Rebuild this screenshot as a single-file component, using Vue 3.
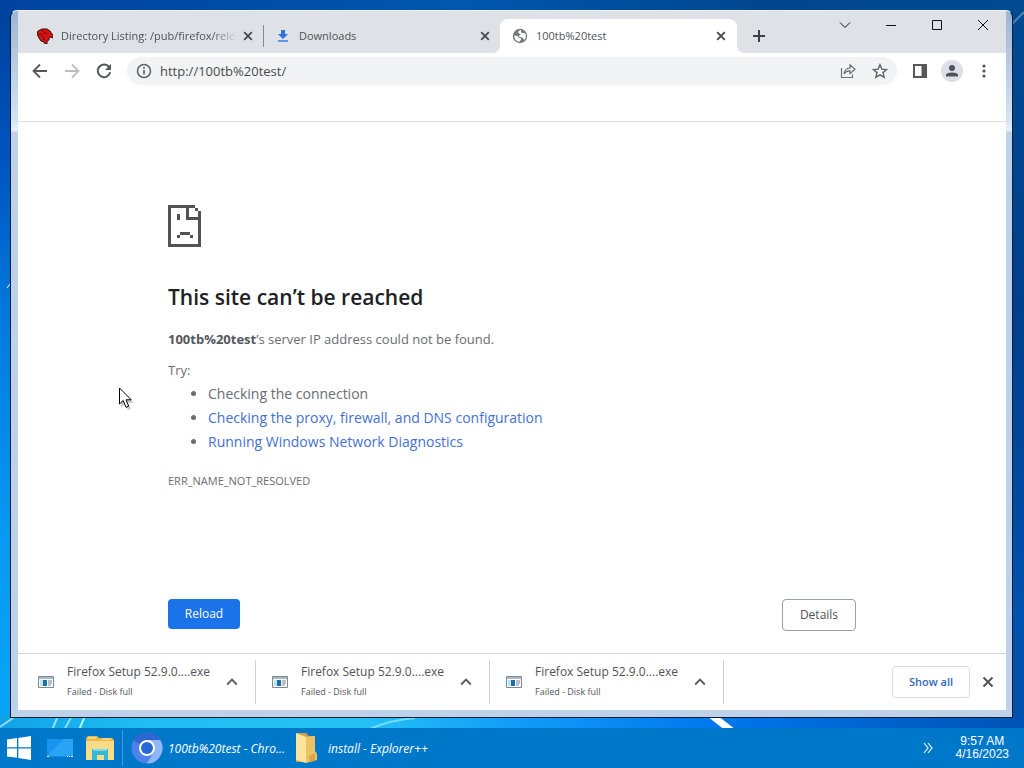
<script setup>
import { ref } from 'vue'

const address = ref('http://100tb%20test/')
const tabs = [
  { title: 'Directory Listing: /pub/firefox/rele', kind: 'dino' },
  { title: 'Downloads', kind: 'download' },
  { title: '100tb%20test', kind: 'globe', active: true },
]
const downloads = [1, 2, 3].map((id) => ({ id, name: 'Firefox Setup 52.9.0....exe', status: 'Failed - Disk full' }))
</script>

<template>
  <div class="desktop">
    <svg class="wallpaper" viewBox="0 0 1024 768" preserveAspectRatio="none" aria-hidden="true">
      <defs>
        <linearGradient id="leftGlow" x1="0" y1="0" x2="0" y2="1">
          <stop offset="0" stop-color="#00419b" />
          <stop offset=".2" stop-color="#0053bd" />
          <stop offset=".4" stop-color="#0078dc" />
          <stop offset=".7" stop-color="#0799f3" />
          <stop offset="1" stop-color="#0aa8f6" />
        </linearGradient>
        <linearGradient id="rightShade" x1="0" y1="0" x2="0" y2="1">
          <stop offset="0" stop-color="#004a91" />
          <stop offset=".4" stop-color="#003f8b" />
          <stop offset=".8" stop-color="#0052b0" />
          <stop offset="1" stop-color="#0052aa" />
        </linearGradient>
        <linearGradient id="topSky">
          <stop offset="0" stop-color="#0042a0" />
          <stop offset=".45" stop-color="#0057ae" />
          <stop offset=".75" stop-color="#00468e" />
          <stop offset="1" stop-color="#004a90" />
        </linearGradient>
        <linearGradient id="floor">
          <stop offset="0" stop-color="#10a2e8" />
          <stop offset=".14" stop-color="#20bdf2" />
          <stop offset=".35" stop-color="#25c2f5" />
          <stop offset=".5" stop-color="#129df8" />
          <stop offset=".7" stop-color="#0077ee" />
          <stop offset="1" stop-color="#0052b4" />
        </linearGradient>
      </defs>
      <rect width="512" height="768" fill="url(#leftGlow)" />
      <rect x="512" width="512" height="768" fill="url(#rightShade)" />
      <rect width="1024" height="11" fill="url(#topSky)" />
      <rect y="714" width="1024" height="20" fill="url(#floor)" />
      <path d="M0 727L16 716M52 730l6-14M64 730l8-14" stroke="#90dcfa" stroke-width="2" />
      <path d="M79 730l6-14" stroke="#a8ffe0" stroke-width="2" />
      <path d="M370 729q20-9 45-11" stroke="#75dcfb" stroke-width="2" fill="none" />
      <path d="M710 714l23 18" stroke="#fff" stroke-width="7" />
      <path d="M1012 24l12-12" stroke="#4b83b6" stroke-width="2" />
      <path d="M7 288l4-5v4" stroke="#fff" fill="none" />
    </svg>

    <div class="workspace">
      <main class="window">
        <header class="strip">
          <div class="tabs" role="tablist">
            <div v-for="tab in tabs" :key="tab.title" class="tab" :class="[tab.kind, { active: tab.active }]">
              <svg v-if="tab.kind === 'dino'" class="fav" viewBox="0 0 16 16">
                <path d="M0 6l1-3 2-1 2-1h5l3 2 2 3 2 2-1 2-3-1-1 1v2l-2 1v3H8l-1-2-3-1-2-3z" fill="#d41212" stroke="#3c1010" stroke-width="1" />
                <path d="M1 7l3-1 2 2 1 4M5 2l2 3 4 1" stroke="#7c0808" fill="none" />
              </svg>
              <svg v-else-if="tab.kind === 'download'" class="fav" viewBox="0 0 16 16">
                <path d="M6 2h4v4h3L8 11 3 6h3z" fill="#2f75df" /><path d="M3 13h10" stroke="#3c83e8" stroke-width="1.6" />
              </svg>
              <svg v-else class="fav" viewBox="0 0 16 16">
                <circle cx="8" cy="8" r="7.2" fill="#77797c" />
                <path d="M9.200 2.100q-1 2.500 1.200 3l2.700.1q1.800 3.500-.6 6.700L11 10.500 9.600 9H7.200V7.600L9 6.500 7 5.300 6 4.200l1.600-2zM2.200 7.400l3.500.5L7.300 10H9v1.500l-1.400 2.200Q2.500 13 2.200 7.400z" fill="#fff" />
              </svg>
              <button class="tab-title" role="tab" :aria-selected="!!tab.active">{{ tab.title }}</button>
              <button class="tab-close" :aria-label="'Close ' + tab.title">
                <svg viewBox="0 0 10 10"><path d="M1.200 1.200l7.600 7.600M8.800 1.200L1.200 8.800" stroke="#45484c" stroke-width="1.8" /></svg>
              </button>
            </div>
          </div>
          <button class="new-tab" aria-label="New tab">
            <svg width="12" height="12" viewBox="0 0 12 12"><path d="M6 0v12M0 6h12" stroke="#3c3f43" stroke-width="2" /></svg>
          </button>
          <div class="controls">
            <button aria-label="Search tabs"><svg width="12" height="12" viewBox="0 0 12 12"><path d="M1 3.500l5 5 5-5" /></svg></button>
            <button aria-label="Minimize"><svg width="12" height="12" viewBox="0 0 12 12"><path d="M1 6.500h10" /></svg></button>
            <button aria-label="Maximize"><svg width="12" height="12" viewBox="0 0 12 12"><path d="M1.500 1.500h9v9h-9z" /></svg></button>
            <button aria-label="Close"><svg width="12" height="12" viewBox="0 0 12 12"><path d="M1 1l10 10M11 1L1 11" /></svg></button>
          </div>
        </header>

        <nav class="toolbar" aria-label="Browser">
          <button aria-label="Back"><svg width="16" height="16" viewBox="0 0 16 16"><path d="M15 8H2M8 1.500L1.500 8 8 14.500" stroke="#55585b" stroke-width="1.800" fill="none" /></svg></button>
          <button aria-label="Forward"><svg width="16" height="16" viewBox="0 0 16 16"><path d="M1 8h13M8 1.500L14.500 8 8 14.500" stroke="#bcbdbe" stroke-width="1.800" fill="none" /></svg></button>
          <button aria-label="Reload page"><svg width="16" height="16" viewBox="0 0 16 16"><path d="M13.200 4.200A6.300 6.300 0 1 0 14.200 9.300" stroke="#55585b" stroke-width="2" fill="none" /><path d="M15 1v6H9z" fill="#55585b" /></svg></button>
          <div class="omnibox">
            <button aria-label="Site information"><svg width="16" height="16" viewBox="0 0 16 16"><circle cx="8" cy="8" r="6.500" fill="none" stroke="#5f6368" stroke-width="1.500" /><path d="M8 7v4.500M8 4v1.700" stroke="#5f6368" stroke-width="1.700" /></svg></button>
            <input v-model="address" aria-label="Address and search bar" />
            <button aria-label="Share"><svg width="16" height="16" viewBox="0 0 16 16"><path d="M1.500 5v9.500h11v-3M4 11q.5-5.500 6-6V1.800L15 6.300l-5 4.400V7.800Q6 7.800 4 11z" fill="none" stroke="#6b6e72" stroke-width="1.200" /></svg></button>
            <button aria-label="Bookmark this page"><svg width="16" height="16" viewBox="0 0 16 16"><path d="M8 1.700l1.900 4.400 4.700.4-3.600 3.100 1.100 4.700L8 11.800l-4.100 2.500L5 9.600 1.400 6.500l4.700-.4z" fill="none" stroke="#5f6368" stroke-width="1.400" /></svg></button>
          </div>
          <button aria-label="Side panel"><svg width="14" height="14" viewBox="0 0 14 14"><path d="M1 1h12v12H1z" fill="none" stroke="#55585b" stroke-width="2" /><path d="M8.500 0H14v14H8.500z" fill="#55585b" /></svg></button>
          <button aria-label="Profile"><svg width="22" height="22" viewBox="0 0 22 22"><circle cx="11" cy="11" r="11" fill="#dedfe6" /><circle cx="11" cy="8" r="3" fill="#50505f" /><path d="M5 16.500v-1.200Q5 12.500 11 12.500t6 2.800v1.200z" fill="#50505f" /></svg></button>
          <button aria-label="Menu"><svg width="4" height="14" viewBox="0 0 4 14"><circle cx="2" cy="2" r="1.600" /><circle cx="2" cy="7" r="1.600" /><circle cx="2" cy="12" r="1.600" /></svg></button>
        </nav>
        <div class="bookmarks"></div>

        <section class="page">
          <article class="error">
            <svg class="sad" width="33" height="42" viewBox="0 0 33 42" shape-rendering="crispEdges" aria-hidden="true">
              <path d="M0 0H27V3H21V12H30V6H33V42H0ZM3 3V39H30V15H18V3ZM27 3h3v3h-3zM9 9h3v6H9zM12 27h10v3H12zM9 30h3v3H9zM22 30h3v3h-3z" fill="#535353" fill-rule="evenodd" />
            </svg>
            <h1>This site can’t be reached</h1>
            <p class="reason"><strong>100tb%20test</strong>’s server IP address could not be found.</p>
            <p class="try">Try:</p>
            <ul>
              <li>Checking the connection</li>
              <li><a href="#proxy">Checking the proxy, firewall, and DNS configuration</a></li>
              <li><a href="#diagnostics">Running Windows Network Diagnostics</a></li>
            </ul>
            <p class="code">ERR_NAME_NOT_RESOLVED</p>
            <div class="actions">
              <button class="reload">Reload</button>
              <button class="details">Details</button>
            </div>
          </article>
        </section>

        <footer class="shelf">
          <div v-for="item in downloads" :key="item.id" class="item">
            <svg width="16" height="12" viewBox="0 0 16 12" aria-hidden="true">
              <path d="M.5.500h15v11H.5z" fill="#fff" stroke="#7b8b96" /><path d="M1 1h14v2H1z" fill="#a9b8c2" /><path d="M2 4h3v6H2z" fill="#bde4f1" /><path d="M5 4h4v6H5z" fill="#1d6fa8" /><path d="M10 5h4M10 7h4M10 9h3" stroke="#7a8084" />
            </svg>
            <div class="file"><span class="name">{{ item.name }}</span><span class="status">{{ item.status }}</span></div>
            <button class="more" :aria-label="'Options for ' + item.name"><svg width="12" height="8" viewBox="0 0 12 8"><path d="M1.200 6.500L6 1.700l4.800 4.800" fill="none" stroke="#5a5d61" stroke-width="1.900" /></svg></button>
          </div>
          <button class="show-all">Show all</button>
          <button class="dismiss" aria-label="Close downloads bar"><svg width="12" height="12" viewBox="0 0 12 12"><path d="M1.500 1.500l9 9M10.500 1.500l-9 9" stroke="#505357" stroke-width="1.900" /></svg></button>
        </footer>
      </main>
    </div>

    <footer class="taskbar">
      <button class="start" aria-label="Start"><svg width="24" height="24" viewBox="0 0 24 24"><path d="M0 3.500l10-1.400V11.300H0zM11.300 1.900L24 0v11.300H11.300zM0 12.600h10v9.200L0 20.500zM11.300 12.600H24V24l-12.700-1.900z" fill="#fff" /></svg></button>
      <button class="quick" aria-label="Show desktop"><svg width="28" height="20" viewBox="0 0 28 20"><path d="M1 1h26v17H1z" fill="#1595ed" /><path d="M1 18L18 1h9v17z" fill="#29a4f4" /><path d="M1 18.500h26" stroke="#158ee0" /><path d="M1 18.500h2M21 18.500h1M23 18.500h1M25 18.500h2" stroke="#fff" /></svg></button>
      <button class="quick" aria-label="File Explorer"><svg width="28" height="25" viewBox="0 0 28 25"><path d="M0 2l2-2h9l2 2h13l2 2v20H0z" fill="#e9b94e" /><path d="M0 5h28v19H0z" fill="#fbdc86" /><path d="M2 2h8M16 3h9" stroke="#fff0b0" /><path d="M6 24V13h16v11h-4v-5h-7v5z" fill="#31b9d7" /><path d="M7 14h14" stroke="#72dcef" stroke-width="2" /></svg></button>
      <span class="rule"></span>
      <button class="task chromium">
        <svg width="32" height="32" viewBox="0 0 32 32" aria-hidden="true"><circle cx="16" cy="16" r="15.500" fill="#4d83e8" /><path d="M2.500 8.500A15.500 15.500 0 0 1 29.500 8.500L16 16z" fill="#2e66cf" /><path d="M16 8h13.300A15.500 15.500 0 0 1 16 31.500L23 20z" fill="#8fb6f5" /><circle cx="16" cy="16" r="8" fill="#fff" /><circle cx="16" cy="16" r="6" fill="#2768d5" /></svg>
        <span>100tb%20test - Chro...</span>
      </button>
      <button class="task">
        <svg width="24" height="32" viewBox="0 0 24 32" aria-hidden="true"><path d="M1 1h10l3 3h6v24l-9 2H1z" fill="#d9a244" /><path d="M1 1l10 4v26L1 28z" fill="#fbe49b" /><path d="M11 5l9-1v15l2 3v6l-11 3z" fill="#edc263" /><path d="M14 24l6-3v8l-5 1z" fill="#d8a547" /></svg>
        <span>install - Explorer++</span>
      </button>
      <button class="overflow" aria-label="Show hidden icons"><svg width="10" height="12" viewBox="0 0 10 12"><path d="M1 1l4 5-4 5M5 1l4 5-4 5" fill="none" stroke="#e9f6ff" stroke-width="1.200" /></svg></button>
      <time class="clock" datetime="2023-04-16T09:57"><span>9:57 AM</span><span>4/16/2023</span></time>
    </footer>

    <svg class="pointer" width="18" height="24" viewBox="0 0 18 24" aria-hidden="true"><path d="M3 3v18l4-4 3 6 3-1-3-6h6z" fill="#0003" /><path d="M1.500 1v16l3.700-3.500L8 20.300l2.700-1.100L8 12.800h5.200z" fill="#fff" stroke="#000" /></svg>
  </div>
</template>

<style>
html, body { margin: 0; }
</style>

<style scoped>
* { box-sizing: border-box; }
.desktop { position: relative; min-height: 100vh; display: flex; flex-direction: column; overflow: hidden; font-family: "Open Sans", "Noto Sans", sans-serif; font-weight: 400; isolation: isolate; }
.wallpaper { position: absolute; inset: 0; width: 100%; height: 100%; z-index: -1; }
button { border: 0; padding: 0; margin: 0; background: none; font: inherit; color: inherit; display: flex; align-items: center; justify-content: center; flex-shrink: 0; }
svg { display: block; flex-shrink: 0; }
.workspace { flex: 1; display: flex; padding: 10px 11px 10px 10px; }
.window { flex: 1; min-width: 0; display: flex; flex-direction: column; border: 1px solid #071d36; border-top-color: #eef3f8; border-radius: 7px 7px 0 0; padding: 0 6px 7px 7px; background: linear-gradient(#9eb4d6, #d5e4f4 110px, #e6f0fa 119px, #bdd1ea 122px, #bdd1ea); }
.strip { height: 42px; display: flex; background: #dee1e6; }
.tabs { display: flex; align-items: flex-end; }
.tab { height: 34px; display: flex; align-items: center; width: 236px; padding: 0 9px 0 11px; font-size: 11px; color: #505357; }
.tab.dino { width: 246px; padding-left: 19px; border-right: 1px solid #85898f; border-image: linear-gradient(transparent 7px, #85898f 7px, #85898f 27px, transparent 27px) 1; }
.tab.active { position: relative; background: #fff; border-radius: 8px 8px 0 0; width: 237px; padding-left: 12px; padding-right: 10px; }
.tab.active::before, .tab.active::after { content: ""; position: absolute; bottom: 0; width: 8px; height: 8px; }
.tab.active::before { left: -8px; background: radial-gradient(circle at 0 0, transparent 8px, #fff 8px); }
.tab.active::after { right: -8px; background: radial-gradient(circle at 100% 0, transparent 8px, #fff 8px); }
.fav { width: 16px; height: 16px; }
.tab-title { flex: 1; min-width: 0; display: block; text-align: left; margin: 0 4px 0 8px; white-space: nowrap; overflow: hidden; line-height: 20px; }
.dino .tab-title { -webkit-mask-image: linear-gradient(90deg, #000 85%, transparent); mask-image: linear-gradient(90deg, #000 85%, transparent); }
.tab-close { width: 12px; height: 16px; }
.tab-close svg { width: 10px; height: 10px; }
.new-tab { width: 28px; height: 34px; align-self: flex-end; margin-left: 8px; }
.controls { display: flex; margin-left: auto; height: 28px; }
.controls button { width: 46px; }
.controls path { fill: none; stroke: #111; }
.toolbar { height: 36px; display: flex; align-items: center; padding: 0 6px; background: #fff; fill: #505357; }
.toolbar > button, .omnibox > button { width: 32px; height: 28px; }
.omnibox { flex: 1; min-width: 0; height: 28px; display: flex; align-items: center; margin: 0 7px; padding: 0 1px; border-radius: 14px; background: #f1f3f4; }
.omnibox input { flex: 1; min-width: 0; border: 0; outline: 0; padding: 0; background: none; font: inherit; font-size: 13px; line-height: 20px; color: #484b4f; }
.bookmarks { height: 33px; background: #fff; border-bottom: 1px solid #d9dbdd; }
.page { flex: 1; background: #fff; padding: 83px 24px 22px; display: flex; }
.error { width: 100%; max-width: 688px; margin: 0 auto; display: flex; flex-direction: column; color: #6a6d72; font-size: 13px; line-height: 24px; }
h1 { margin: 34px 0 0; font-size: 21px; line-height: 32px; font-weight: 600; color: #202124; }
p { margin: 0; }
.reason { margin-top: 14px; }
.reason strong { font-weight: 700; color: #55585c; }
.try { margin-top: 7px; }
ul { margin: 0; padding-left: 40px; font-size: 14px; }
a { color: #4570cf; text-decoration: none; }
.code { margin-top: 15px; font-size: 11px; }
.actions { display: flex; justify-content: space-between; align-items: flex-start; margin-top: auto; font-size: 12px; }
.reload { width: 72px; height: 30px; border-radius: 4px; color: #fff; background: #1a73e8; }
.details { width: 74px; height: 32px; border: 1px solid #9aa0a6; border-radius: 4px; background: #fff; color: #505357; }
.shelf { height: 57px; display: flex; align-items: center; background: #fff; border-top: 1px solid #d4d6d8; padding: 0 9px 1px 0; }
.item { width: 234px; height: 44px; display: flex; align-items: center; border-right: 1px solid #cfd1d4; padding-left: 16px; }
.item:first-child { width: 238px; padding-left: 20px; }
.file { display: flex; flex-direction: column; margin-left: 13px; flex: 1; color: #505357; white-space: nowrap; }
.name { font-size: 12px; line-height: 20px; }
.status { font-size: 9px; line-height: 20px; }
.more { width: 24px; height: 28px; margin-right: 11px; }
.show-all { width: 78px; height: 32px; margin-left: auto; border: 1px solid #dadce0; border-radius: 4px; color: #2f69be; font-size: 11px; font-weight: 600; }
.dismiss { width: 18px; height: 28px; margin-left: 9px; }
.taskbar { height: 40px; display: flex; align-items: center; background: #0078ca; color: #fff; padding: 0 15px 0 7px; font-size: 12px; }
.quick { margin-left: 12px; }
.start + .quick { margin-left: 15px; }
.rule { width: 1px; height: 36px; margin: 0 8px; background: #3e9add; }
.task { gap: 5px; font-size: 12px; font-style: italic; font-weight: 400; }
.task + .task { margin-left: 10px; gap: 9px; }
.overflow { margin-left: auto; width: 16px; height: 24px; margin-right: 20px; }
.clock { display: flex; flex-direction: column; align-items: center; line-height: 13px; font-size: 12px; font-family: "Liberation Sans", sans-serif; }
.pointer { position: absolute; left: 118px; top: 387px; }
</style>
